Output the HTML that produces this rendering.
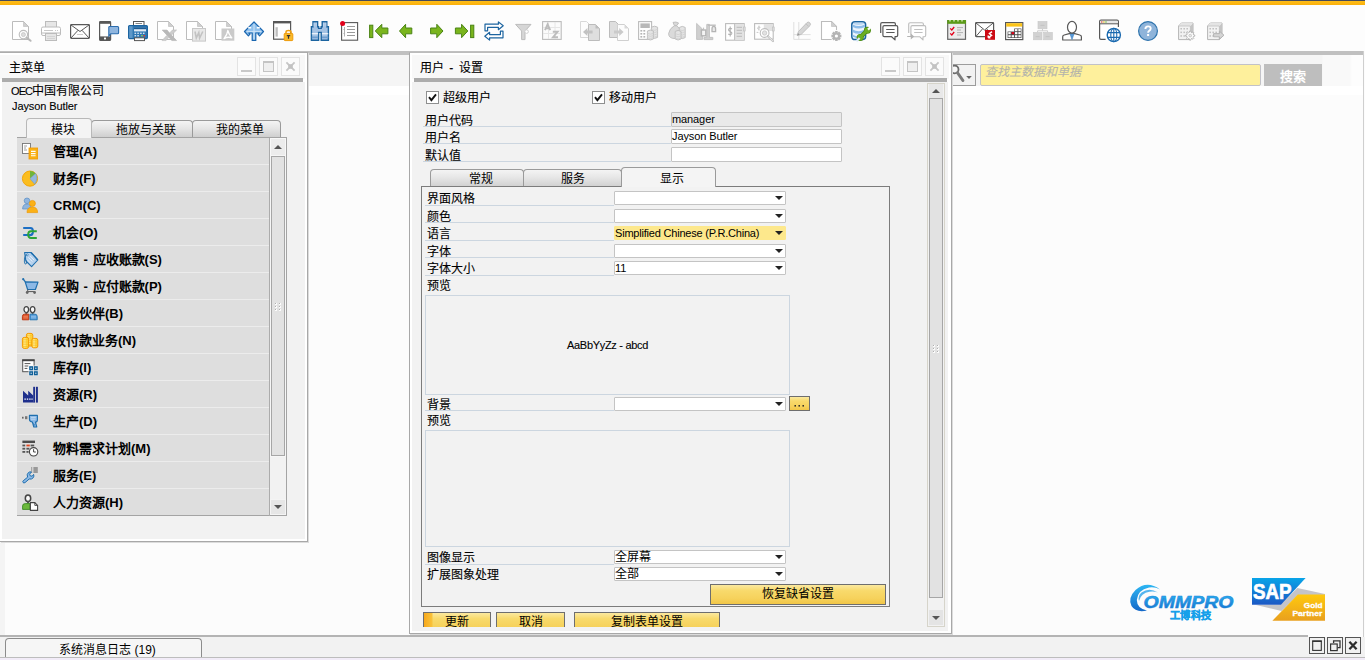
<!DOCTYPE html>
<html lang="zh-CN"><head><meta charset="utf-8"><title>SAP Business One</title>
<style>
*{box-sizing:border-box;margin:0;padding:0}
html,body{width:1365px;height:660px;overflow:hidden}
body{background:#fcfcfc;font-family:"Liberation Sans",sans-serif;font-size:12px;color:#000;position:relative}
.a{position:absolute}
.t{position:absolute;white-space:nowrap;line-height:16px;height:16px;margin-top:1px;-webkit-text-stroke-width:.1px}
.s11{font-size:11px;letter-spacing:-0.1px;margin-top:0}
.win{position:absolute;background:#fff}
.wtitle{position:absolute;background:#f8f8f8}
.wbody{position:absolute;background:#f2f2f2}
.tbar{position:absolute;height:4px;background:#acacac}
.wb{position:absolute;width:19px;height:19px;top:57px;border:1px solid #e3e3e3;background:#fbfbfb}
.row{position:absolute;left:17px;width:252px;height:26px;background:#dedede}
.row b{position:absolute;left:36px;top:6px;font-size:13px;line-height:16px;white-space:nowrap;word-spacing:1px}
.row svg{position:absolute;left:5px;top:5px}
.sep{position:absolute;left:17px;width:252px;height:1px;background:#ececec}
.ul{position:absolute;height:1px;background:#ccd6e0}
.inp{position:absolute;height:15px;border:1px solid #c4c4c4;background:#fff;border-radius:1px;font-size:11px;line-height:13px;padding-left:0;letter-spacing:-0.1px;white-space:nowrap}
.dd{position:absolute;left:614px;width:172px;height:14px;border:1px solid #c4c4c4;background:#fff;border-radius:1px;font-size:11px;line-height:12px;padding-left:0;white-space:nowrap}
.dd i{position:absolute;right:2px;top:4px;width:0;height:0;border-left:4px solid transparent;border-right:4px solid transparent;border-top:4px solid #222}
.tab{position:absolute;padding-left:7px;padding-top:1px;border:1px solid #9a9a9a;border-bottom:none;border-radius:4px 4px 0 0;background:linear-gradient(#f4f4f4,#e6e6e6 45%,#cfcfcf);text-align:center;line-height:17px}
.tab.on{background:#f4f4f4;border-color:#b8b8b8}
.btn{position:absolute;border:1px solid #6e6e6e;background:linear-gradient(#fbe9a0,#f8da6c 30%,#f6d25c 70%,#f1c648);text-align:center;white-space:nowrap}
.pv{position:absolute;border:1px solid #ccd6e0;background:#f2f2f2}
.ic{position:absolute;top:21px}
.sb{position:absolute;width:16px;height:17px;top:637px;border:1px solid #555;background:#f0f0f0}
</style></head>
<body>
<div class="a" style="left:0;top:0;width:1365px;height:1px;background:#454b5c"></div><div class="a" style="left:0;top:1px;width:1365px;height:4px;background:linear-gradient(#fdbd1a,#fbb00a)"></div><div class="a" style="left:0;top:5px;width:1365px;height:46px;background:#fdfdfd"></div><div class="a" style="left:0;top:51px;width:1363px;height:4px;background:#c0c0c0"></div><div class="a" style="left:0;top:55px;width:1363px;height:31px;background:linear-gradient(90deg,#f5f5f5 0,#f5f5f5 1322px,#f9f9f9 1323px,#f9f9f9 1350px,#fdfdfd 1352px)"></div><div class="a" style="left:0;top:86px;width:1363px;height:9px;background:#ffffff"></div><div class="a" style="left:1363px;top:51px;width:1px;height:586px;background:#cfcfcf"></div><div class="a" style="left:0;top:542px;width:5px;height:94px;background:#f4f4f4"></div><div class="ic" style="left:12px"><svg width="24" height="22" viewBox="0 0 24 22" style="overflow:visible;display:block"><path d="M.5 .5H11.5L16.5 5.5V18.5H.5Z" fill="#fff" stroke="#bcbcbc"/><path d="M11.5 .5V5.5H16.5Z" fill="#cfcfcf" stroke="#bcbcbc" stroke-width=".6"/><circle cx="11.4" cy="13.6" r="4.2" fill="#fff" stroke="#bdbdbd" stroke-width="1.1"/><circle cx="11.4" cy="13.6" r="2" fill="#ddd" stroke="#c4c4c4" stroke-width=".8"/><path d="M14.6 16.6L18.6 19.8" stroke="#b8b8b8" stroke-width="2" stroke-linecap="round"/></svg></div><div class="ic" style="left:41px"><svg width="24" height="22" viewBox="0 0 24 22" style="overflow:visible;display:block"><rect x="4.5" y=".5" width="11" height="6" fill="#e6e6e6" stroke="#bcbcbc"/><rect x=".5" y="6" width="19" height="8.5" rx="1.5" fill="#fff" stroke="#bcbcbc"/><path d="M3 9.5H12M14 9.5H15M16 9.5H17" stroke="#c8c8c8"/><path d="M.5 12H19.5" stroke="#bcbcbc"/><rect x="4.5" y="12.5" width="11" height="7" fill="#e6e6e6" stroke="#bcbcbc"/><path d="M6 15.5H14M6 17.5H14" stroke="#d4d4d4"/></svg></div><div class="ic" style="left:70px"><svg width="24" height="22" viewBox="0 0 24 22" style="overflow:visible;display:block"><rect x=".6" y="3.6" width="18.8" height="13.8" rx=".8" fill="#fff" stroke="#585858" stroke-width="1.2"/><path d="M1 4L10 10.5L19 4M1 17L8 9.3M19 17L12 9.3" fill="none" stroke="#585858" stroke-width="1"/><path d="M7 13.5H13" stroke="#ccc"/></svg></div><div class="ic" style="left:99px"><svg width="24" height="22" viewBox="0 0 24 22" style="overflow:visible;display:block"><rect x=".6" y=".6" width="11" height="18.8" rx=".8" fill="#fff" stroke="#585858" stroke-width="1.2"/><rect x=".6" y=".6" width="11" height="2.2" fill="#585858"/><rect x=".6" y="15.4" width="11" height="4" fill="#585858"/><rect x="5" y="16.6" width="2" height="1.8" fill="#fff"/><path d="M10.2 5.5H18.6Q19.6 5.5 19.6 6.5V11.8Q19.6 12.8 18.6 12.8H11.8L9.8 15V6.2Q9.8 5.5 10.6 5.5Z" fill="#8fb5de" stroke="#2a6cae" stroke-width="1.1"/></svg></div><div class="ic" style="left:128px"><svg width="24" height="22" viewBox="0 0 24 22" style="overflow:visible;display:block"><rect x="5.5" y=".5" width="10.5" height="5" fill="#fff" stroke="#555"/><path d="M7.5 2.5H14" stroke="#888"/><rect x=".6" y="4.6" width="18.8" height="13" rx="1" fill="#2f77b3" stroke="#1c64a0" stroke-width="1.2"/><rect x="1.2" y="5.2" width="3.4" height="11.8" fill="#5e98c9"/><rect x="6" y="6.2" width="12" height="4.2" fill="#dfeaf5"/><rect x="6" y="6.2" width="12" height="2" fill="#1c5c94"/><g fill="#cfe0f0"><rect x="6.5" y="11.6" width="1.6" height="1.4"/><rect x="9.3" y="11.6" width="1.6" height="1.4"/><rect x="12.1" y="11.6" width="1.6" height="1.4"/><rect x="14.9" y="11.6" width="1.6" height="1.4"/><rect x="6.5" y="14" width="1.6" height="1.4"/><rect x="9.3" y="14" width="1.6" height="1.4"/></g><rect x="13.2" y="14" width="1.5" height="1.4" fill="#8fd14f"/><rect x="15.6" y="14" width="1.5" height="1.4" fill="#e8372c"/><rect x="6.5" y="16.8" width="10" height="2.8" fill="#fff" stroke="#555"/></svg></div><div class="ic" style="left:157px"><svg width="24" height="22" viewBox="0 0 24 22" style="overflow:visible;display:block"><path d="M.5 .5H11.5L16.5 5.5V18.5H.5Z" fill="#fff" stroke="#bcbcbc"/><path d="M11.5 .5V5.5H16.5Z" fill="#cfcfcf" stroke="#bcbcbc" stroke-width=".6"/><path d="M5.2 9H10L12.4 12.2L15.4 9H19.6L14.4 14.2L19.6 19.6H14.8L12 16.2L9 19.6H5L10 14.2Z" fill="#cdcdcd" stroke="#bdbdbd" stroke-width=".6"/><path d="M5.2 9H10L19.6 19.6H14.8Z" fill="#b9b9b9"/></svg></div><div class="ic" style="left:186px"><svg width="24" height="22" viewBox="0 0 24 22" style="overflow:visible;display:block"><path d="M.5 .5H11.5L16.5 5.5V18.5H.5Z" fill="#fff" stroke="#bcbcbc"/><path d="M11.5 .5V5.5H16.5Z" fill="#cfcfcf" stroke="#bcbcbc" stroke-width=".6"/><rect x="6.5" y="7.5" width="13" height="12.6" fill="#e8e8e8" stroke="#c8c8c8"/><path d="M9 10.5L10.3 17L12.8 11.5L13.6 17L16.8 10.5" fill="none" stroke="#c2c2c2" stroke-width="1.6"/></svg></div><div class="ic" style="left:215px"><svg width="24" height="22" viewBox="0 0 24 22" style="overflow:visible;display:block"><path d="M.5 .5H11.5L16.5 5.5V18.5H.5Z" fill="#fff" stroke="#bcbcbc"/><path d="M11.5 .5V5.5H16.5Z" fill="#cfcfcf" stroke="#bcbcbc" stroke-width=".6"/><rect x="6.5" y="7.5" width="12.8" height="12.2" fill="#cacaca"/><path d="M12.8 9.5Q13.6 13 16.8 16.8Q12.8 15.4 9 17.6Q12.4 13.5 12.8 9.5Z" fill="none" stroke="#fff" stroke-width="1.3" stroke-linejoin="round"/></svg></div><div class="ic" style="left:244px"><svg width="24" height="22" viewBox="0 0 24 22" style="overflow:visible;display:block"><path d="M10 .8L19.5 10.5L15.6 14.8L14 13.2L15.2 12H11.8V19.4H8.2V12H4.8L6 13.2L4.4 14.8L.5 10.5Z" fill="#8fc0ec" stroke="#1a66b0" stroke-width="1.2" stroke-linejoin="round"/><path d="M10 3V18.6M2.6 10.4H17.4" stroke="#cfe4f7" stroke-width="1"/><rect x="4.2" y="5.9" width="3" height="1.6" fill="#fff"/><rect x="12.8" y="5.9" width="3" height="1.6" fill="#fff"/></svg></div><div class="ic" style="left:273px"><svg width="24" height="22" viewBox="0 0 24 22" style="overflow:visible;display:block"><rect x=".6" y=".6" width="17" height="17.6" fill="#fff" stroke="#585858" stroke-width="1.2"/><rect x=".6" y=".6" width="17" height="1.8" fill="#585858"/><rect x="2.5" y="6.2" width="2.3" height="9.4" fill="#bdbdbd"/><path d="M13 12.4V11Q13 9.4 15.5 9.4Q18 9.4 18 11V12.4" fill="none" stroke="#f0a010" stroke-width="1.5"/><rect x="11.2" y="12.4" width="8.6" height="7.2" rx=".8" fill="#f9b92a" stroke="#ee9a08" stroke-width="1"/><path d="M13.8 14H17.2V15.2H16.1V17.8H14.9V15.2H13.8Z" fill="#333"/></svg></div><div class="ic" style="left:310px"><svg width="24" height="22" viewBox="0 0 24 22" style="overflow:visible;display:block"><path d="M3 .7H7.6V5.8H8.6V7.4H11.2V5.8H12.2V.7H16.8V5.8H18.4V19.3H11.2V11.4H8.6V19.3H1.4V5.8H3Z" fill="#a4c2e4" stroke="#1c64a0" stroke-width="1.4" stroke-linejoin="miter"/><path d="M1.8 12.8H8.1M12 12.8H18.3" stroke="#fff" stroke-width="1.1"/><path d="M1.8 16.4H8.1M12 16.4H18.3" stroke="#6f9dce" stroke-width="1.6"/><path d="M4 1.6V5.6M6.2 1.6V5.6M13.8 1.6V5.6M16 1.6V5.6" stroke="#cadcf0" stroke-width=".8"/></svg></div><div class="ic" style="left:340px"><svg width="24" height="22" viewBox="0 0 24 22" style="overflow:visible;display:block"><rect x="1.6" y="1.6" width="16" height="17.6" fill="#fff" stroke="#585858" stroke-width="1.1"/><path d="M7 5.5H15M7 8.5H15M7 11.5H15M7 14.5H15" stroke="#9a9a9a" stroke-width="1"/><path d="M4.5 6V15.5M3.5 8.5H4.5M3.5 12.5H4.5" stroke="#a8a8a8" stroke-width=".9" fill="none"/><circle cx="2.6" cy="2.6" r="2.5" fill="#e2001a"/></svg></div><div class="ic" style="left:369px"><svg width="24" height="22" viewBox="0 0 24 22" style="overflow:visible;display:block"><rect x=".6" y="4.2" width="3.2" height="12.4" fill="#7ab51d" stroke="#4a8414"/><path d="M6.3 10L12.8 3.3V7H18.9V12.8H12.8V16.7Z" fill="#7ab51d" stroke="#4a8414" stroke-width="1" stroke-linejoin="round"/></svg></div><div class="ic" style="left:399px"><svg width="24" height="22" viewBox="0 0 24 22" style="overflow:visible;display:block"><path d="M.5 10L6.6 3.3V7H12.8V12.8H6.6V16.7Z" fill="#7ab51d" stroke="#4a8414" stroke-width="1" stroke-linejoin="round"/></svg></div><div class="ic" style="left:430px"><svg width="24" height="22" viewBox="0 0 24 22" style="overflow:visible;display:block"><path d="M13 10L6.8 3.3V7H.6V12.8H6.8V16.7Z" fill="#7ab51d" stroke="#4a8414" stroke-width="1" stroke-linejoin="round"/></svg></div><div class="ic" style="left:455px"><svg width="24" height="22" viewBox="0 0 24 22" style="overflow:visible;display:block"><rect x="15.6" y="4.2" width="3.2" height="12.4" fill="#7ab51d" stroke="#4a8414"/><path d="M12.8 10L6.6 3.3V7H.4V12.8H6.6V16.7Z" fill="#7ab51d" stroke="#4a8414" stroke-width="1" stroke-linejoin="round"/></svg></div><div class="ic" style="left:484px"><svg width="24" height="22" viewBox="0 0 24 22" style="overflow:visible;display:block"><path d="M1 9.8V3.2H14.4V.9L19.2 4.8L14.4 8.7V6.4H3.6V9.8Z" fill="#fff" stroke="#1c64a0" stroke-width="1.2" stroke-linejoin="round"/><path d="M19 10.2V16.8H5.6V19.1L.8 15.2L5.6 11.3V13.6H16.4V10.2Z" fill="#fff" stroke="#1c64a0" stroke-width="1.2" stroke-linejoin="round"/></svg></div><div class="ic" style="left:515px"><svg width="24" height="22" viewBox="0 0 24 22" style="overflow:visible;display:block"><path d="M.6 3.4H16L10 10V18.6H6.6V10Z" fill="#d6d6d6" stroke="#bcbcbc" stroke-width="1" stroke-linejoin="round"/><circle cx="11.6" cy="10.6" r="1.8" fill="#fff" stroke="#d0d0d0"/></svg></div><div class="ic" style="left:542px"><svg width="24" height="22" viewBox="0 0 24 22" style="overflow:visible;display:block"><rect x=".6" y=".6" width="18.6" height="17.8" fill="#fbfbfb" stroke="#bcbcbc" stroke-width="1.1"/><path d="M6.5 1V18M13 1V18M1 6.5H19M1 12.5H19" stroke="#e6e6e6"/><path d="M3 9.2L5.6 3.4L8.2 9.2M4 7.4H7.2" fill="none" stroke="#bdbdbd" stroke-width="1.9"/><path d="M10.8 10.8H15.6L11 16.2H16" fill="none" stroke="#bdbdbd" stroke-width="1.9"/></svg></div><div class="ic" style="left:580px"><svg width="24" height="22" viewBox="0 0 24 22" style="overflow:visible;display:block"><path d="M.5 .5H6.5L9.5 3.5V16.5H.5Z" fill="#fcfcfc" stroke="#d8d8d8"/><path d="M8.5 3.5H15.5L19.5 7.5V19.5H8.5Z" fill="#dedede" stroke="#bcbcbc"/><path d="M15.5 3.5V7.5H19.5Z" fill="#bdbdbd"/><path d="M3 11L7.4 7V9.6H12.6V12.4H7.4V15Z" fill="#c2c2c2"/></svg></div><div class="ic" style="left:609px"><svg width="24" height="22" viewBox="0 0 24 22" style="overflow:visible;display:block"><path d="M.5 .5H6.5L9.5 3.5V16.5H.5Z" fill="#dedede" stroke="#bcbcbc"/><path d="M8.5 3.5H15.5L19.5 7.5V19.5H8.5Z" fill="#fcfcfc" stroke="#d0d0d0"/><path d="M15.5 3.5V7.5H19.5Z" fill="#d8d8d8"/><path d="M14.6 11L10.2 7V9.6H5V12.4H10.2V15Z" fill="#cacaca"/></svg></div><div class="ic" style="left:638px"><svg width="24" height="22" viewBox="0 0 24 22" style="overflow:visible;display:block"><rect x=".6" y=".6" width="13" height="17.8" fill="#fff" stroke="#bcbcbc" stroke-width="1.1"/><rect x="2.4" y="2.4" width="9.4" height="4.6" fill="#b8b8b8"/><g fill="#b4b4b4"><rect x="2.4" y="9" width="1.8" height="1.6"/><rect x="5.4" y="9" width="1.8" height="1.6"/><rect x="2.4" y="12" width="1.8" height="1.6"/><rect x="5.4" y="12" width="1.8" height="1.6"/><rect x="2.4" y="15" width="1.8" height="1.6"/><rect x="5.4" y="15" width="1.8" height="1.6"/></g><path d="M13.4 6.2V16.4Q16.5 18.4 19.6 16.4V6.2Q16.5 4.2 13.4 6.2Z" fill="#e4e4e4" stroke="#bcbcbc" stroke-width=".9"/><path d="M13.4 8.4Q16.5 10.4 19.6 8.4" fill="none" stroke="#cfcfcf" stroke-width=".8"/><path d="M13.4 10.600000000000001Q16.5 12.600000000000001 19.6 10.600000000000001" fill="none" stroke="#cfcfcf" stroke-width=".8"/><path d="M13.4 12.8Q16.5 14.8 19.6 12.8" fill="none" stroke="#cfcfcf" stroke-width=".8"/><path d="M13.4 15.0Q16.5 17.0 19.6 15.0" fill="none" stroke="#cfcfcf" stroke-width=".8"/><path d="M9.4 10V18Q12.4 20 15.4 18V10Q12.4 8 9.4 10Z" fill="#e4e4e4" stroke="#bcbcbc" stroke-width=".9"/><path d="M9.4 12.2Q12.4 14.2 15.4 12.2" fill="none" stroke="#cfcfcf" stroke-width=".8"/><path d="M9.4 14.399999999999999Q12.4 16.4 15.4 14.399999999999999" fill="none" stroke="#cfcfcf" stroke-width=".8"/><path d="M9.4 16.599999999999998Q12.4 18.599999999999998 15.4 16.599999999999998" fill="none" stroke="#cfcfcf" stroke-width=".8"/></svg></div><div class="ic" style="left:668px"><svg width="24" height="22" viewBox="0 0 24 22" style="overflow:visible;display:block"><path d="M5 1.4Q8 .4 10.6 2L8.8 4.6H6.4Z" fill="#d8d8d8" stroke="#bcbcbc" stroke-width=".9"/><path d="M6.2 4.8H9Q13 8 13 13Q13 17.6 7.4 17.6Q.6 17.6 .6 12.6Q1.4 7.6 6.2 4.8Z" fill="#dadada" stroke="#bcbcbc" stroke-width=".9"/><path d="M11.4 6.4V16.6Q14.3 18.6 17.2 16.6V6.4Q14.3 4.4 11.4 6.4Z" fill="#e4e4e4" stroke="#bcbcbc" stroke-width=".9"/><path d="M11.4 8.600000000000001Q14.3 10.600000000000001 17.2 8.600000000000001" fill="none" stroke="#cfcfcf" stroke-width=".8"/><path d="M11.4 10.8Q14.3 12.8 17.2 10.8" fill="none" stroke="#cfcfcf" stroke-width=".8"/><path d="M11.4 13.0Q14.3 15.0 17.2 13.0" fill="none" stroke="#cfcfcf" stroke-width=".8"/><path d="M11.4 15.2Q14.3 17.2 17.2 15.2" fill="none" stroke="#cfcfcf" stroke-width=".8"/><path d="M7.2 10.4V18Q10.1 20 13 18V10.4Q10.1 8.4 7.2 10.4Z" fill="#e4e4e4" stroke="#bcbcbc" stroke-width=".9"/><path d="M7.2 12.600000000000001Q10.1 14.600000000000001 13 12.600000000000001" fill="none" stroke="#cfcfcf" stroke-width=".8"/><path d="M7.2 14.8Q10.1 16.8 13 14.8" fill="none" stroke="#cfcfcf" stroke-width=".8"/><path d="M7.2 17.0Q10.1 19.0 13 17.0" fill="none" stroke="#cfcfcf" stroke-width=".8"/></svg></div><div class="ic" style="left:696px"><svg width="24" height="22" viewBox="0 0 24 22" style="overflow:visible;display:block"><path d="M.6 2.4L6.6 8.2V18.4H.6Z" fill="#cfcfcf" stroke="#bcbcbc" stroke-width=".8"/><path d="M10.8 3.4H13.4V16.4H16.8V18.6H8V16.4H10.8Z" fill="#d0d0d0" stroke="#bcbcbc" stroke-width=".9"/><path d="M12 4.2H19.8" stroke="#bdbdbd" stroke-width="1.4"/><rect x="5.4" y="9" width="4.4" height="5.8" fill="#f4f4f4" stroke="#b4b4b4" stroke-width="1.4"/><path d="M7.6 6.6V9" stroke="#bdbdbd" stroke-width="1"/><path d="M16 10.6V8Q16 5.4 17.8 5.4Q19.6 5.4 19.6 8V10.6Z" fill="#e9e9e9" stroke="#b4b4b4" stroke-width="1.3"/></svg></div><div class="ic" style="left:725px"><svg width="24" height="22" viewBox="0 0 24 22" style="overflow:visible;display:block"><rect x=".6" y="2.6" width="18.6" height="16.6" fill="#fff" stroke="#bcbcbc" stroke-width="1.1"/><rect x="9.8" y="3" width="9" height="15.8" fill="#e2e2e2"/><path d="M9.6 2.6V19" stroke="#bcbcbc"/><rect x="18.6" y="6" width="1.6" height="4" fill="#ddd" stroke="#bcbcbc" stroke-width=".6"/><path d="M11.6 6.4H17M11.6 9.4H17M11.6 12.4H17M11.6 15.4H17" stroke="#c2c2c2" stroke-width="1.1"/><path d="M7 8Q5 6.6 3.8 8Q3 9.6 5.2 10.4Q7.4 11.4 6.6 13Q5.4 14.4 3.2 13M5.2 5.4V15.6" fill="none" stroke="#b0b0b0" stroke-width="1.1"/></svg></div><div class="ic" style="left:754px"><svg width="24" height="22" viewBox="0 0 24 22" style="overflow:visible;display:block"><rect x=".6" y="2.6" width="18.6" height="15.6" fill="#fff" stroke="#bcbcbc" stroke-width="1.1"/><rect x="9.8" y="3" width="9" height="7" fill="#e2e2e2"/><rect x="18.6" y="6" width="1.6" height="4" fill="#ddd" stroke="#bcbcbc" stroke-width=".6"/><path d="M6.4 6.4Q4.4 5.4 3.6 6.8Q3.4 8 5 8.4M2.6 11.4H4.4M5 4.6V9.6" fill="none" stroke="#c2c2c2" stroke-width=".9"/><circle cx="10.6" cy="12" r="4.4" fill="#fff" stroke="#bdbdbd" stroke-width="1.1"/><circle cx="10.6" cy="12" r="2.2" fill="#e2e2e2" stroke="#c6c6c6" stroke-width=".8"/><path d="M13.8 15.2L19 20" stroke="#c0c0c0" stroke-width="2.2" stroke-linecap="round"/><path d="M14.2 15.6L18.8 19.8" stroke="#f4f4f4" stroke-width=".8"/></svg></div><div class="ic" style="left:793px"><svg width="24" height="22" viewBox="0 0 24 22" style="overflow:visible;display:block"><path d="M.8 1V18.4M5.8 1V18.4M.8 13.6H17.6M.8 18.4H17.6" stroke="#dcdcdc" stroke-width=".9" fill="none"/><path d="M4.2 14.6L5.4 10.6L14 1.6Q15.4 .4 16.8 1.8Q18.2 3.4 17 4.6L8.2 13.4Z" fill="#d6d6d6" stroke="#bdbdbd" stroke-width=".9" stroke-linejoin="round"/><path d="M4.2 14.6L5 12L6.8 13.8Z" fill="#9a9a9a"/><path d="M13 2.8L15.8 5.6" stroke="#bdbdbd" stroke-width=".9"/></svg></div><div class="ic" style="left:821px"><svg width="24" height="22" viewBox="0 0 24 22" style="overflow:visible;display:block"><path d="M.5 .5H10.5L15.5 5.5V18.5H.5Z" fill="#fff" stroke="#bcbcbc" stroke-width="1.1"/><path d="M10.5 .5V5.5H15.5Z" fill="#cfcfcf" stroke="#bcbcbc" stroke-width=".6"/><circle cx="15.4" cy="15" r="6" fill="#fdfdfd"/><g transform="translate(15.4 15)"><g fill="#b4b4b4"><rect x="-1.3" y="-5" width="2.6" height="10" transform="rotate(0)"/><rect x="-1.3" y="-5" width="2.6" height="10" transform="rotate(45)"/><rect x="-1.3" y="-5" width="2.6" height="10" transform="rotate(90)"/><rect x="-1.3" y="-5" width="2.6" height="10" transform="rotate(135)"/><circle r="3.5999999999999996"/></g><circle r="1.6" fill="#fff"/></g></svg></div><div class="ic" style="left:851px"><svg width="24" height="22" viewBox="0 0 24 22" style="overflow:visible;display:block"><path d="M.8 3.6Q.8 .8 4 .8H11.4Q14.6 .8 14.6 3.6V15.6Q14.6 18.6 11.4 18.6H4Q.8 18.6 .8 15.6Z" fill="#eef5fc" stroke="#1c64a0" stroke-width="1.5"/><path d="M1.8 3.4Q7.6 6.6 13.8 3.4V6Q7.6 9.2 1.8 6ZM1.8 8.6Q7.6 11.8 13.8 8.6V11.2Q7.6 14.4 1.8 11.2ZM1.8 13.8Q7.6 17 13.8 13.8V15.8Q7.6 18.4 1.8 15.8Z" fill="#8dbdea"/><path d="M2.2 1.8H13V3Q7.6 5 2.2 3Z" fill="#b9d6f2"/><g><path d="M9.6 16L16 9.6" stroke="#4a8a12" stroke-width="4.2" stroke-linecap="round"/><circle cx="16.4" cy="9.2" r="3.5" fill="#4a8a12"/><circle cx="9.2" cy="16.4" r="3.5" fill="#4a8a12"/><path d="M9.6 16L16 9.6" stroke="#6aae22" stroke-width="2.8" stroke-linecap="round"/><circle cx="16.4" cy="9.2" r="2.8" fill="#6aae22"/><circle cx="9.2" cy="16.4" r="2.8" fill="#6aae22"/><path d="M17 8.6L20.4 5.2" stroke="#fdfdfd" stroke-width="2.2"/><path d="M8.6 17L5.4 20.2" stroke="#d9e9f8" stroke-width="2.2"/></g></svg></div><div class="ic" style="left:880px"><svg width="24" height="22" viewBox="0 0 24 22" style="overflow:visible;display:block"><path d="M.7 12V3.1Q.7 1.7 2.1 1.7H14Q15.4 1.7 15.4 3.1V4" fill="none" stroke="#585858" stroke-width="1.2"/><path d="M4.3 4.6H16.3Q17.7 4.6 17.7 6V14.3Q17.7 15.7 16.3 15.7H15V18.9L11.6 15.7H4.3Q2.9 15.7 2.9 14.3V6Q2.9 4.6 4.3 4.6Z" fill="#fff" stroke="#585858" stroke-width="1.2" stroke-linejoin="round"/><path d="M6.2 8.5H14.6M6.2 11.5H14.6" stroke="#585858" stroke-width="1.2"/></svg></div><div class="ic" style="left:907px"><svg width="24" height="22" viewBox="0 0 24 22" style="overflow:visible;display:block"><path d="M1.7 12V3.1Q1.7 1.7 3.1 1.7H15Q16.4 1.7 16.4 3.1V4" fill="none" stroke="#bdbdbd" stroke-width="1.1"/><path d="M5.3 4.6H17.3Q18.7 4.6 18.7 6V14.3Q18.7 15.7 17.3 15.7H16V18.9L12.6 15.7H5.3Q3.9 15.7 3.9 14.3V6Q3.9 4.6 5.3 4.6Z" fill="#fff" stroke="#bdbdbd" stroke-width="1.1" stroke-linejoin="round"/><path d="M7.2 8.5H15.6M7.2 11.5H15.6" stroke="#c0c0c0" stroke-width="1.2"/><path d="M.2 14.9H3.8V12.6L7.2 15.5L3.8 18.4V16.1H.2Z" fill="#b2b2b2"/></svg></div><div class="ic" style="left:947px"><svg width="24" height="22" viewBox="0 0 24 22" style="overflow:visible;display:block"><rect x=".7" y="-.3" width="17.8" height="18.6" fill="#ebebeb" stroke="#666" stroke-width="1.2"/><rect x=".2" y="-1" width="18.8" height="3.8" fill="#5b9a18"/><path d="M3 -1V.4M7 -1V.4M11 -1V.4M15 -1V.4" stroke="#d8ecb8" stroke-width="1.4"/><path d="M3.2 7.4L4.8 9L7.2 6M3.2 12.4L4.8 14L7.2 11" fill="none" stroke="#e2001a" stroke-width="1.3"/><path d="M10 6.6H16M10 9H14M10 11.6H16M10 14H14" stroke="#b2b2b2" stroke-width="1"/></svg></div><div class="ic" style="left:975px"><svg width="24" height="22" viewBox="0 0 24 22" style="overflow:visible;display:block"><rect x=".6" y="1.6" width="18" height="14" rx=".8" fill="#fff" stroke="#585858" stroke-width="1.2"/><path d="M1 2L9.6 9L18.2 2M1 15.4L7.4 8M18.2 15.4L11.8 8" fill="none" stroke="#585858" stroke-width="1"/><rect x="10" y="9" width="10" height="9.8" fill="#cc0a14"/><path d="M17 10.6L14.4 12.6L16.6 14.4L13.2 16.8M13.2 16.8V14.6M13.2 16.8H15.4" fill="none" stroke="#fff" stroke-width="1.4"/></svg></div><div class="ic" style="left:1005px"><svg width="24" height="22" viewBox="0 0 24 22" style="overflow:visible;display:block"><rect x=".6" y="1.6" width="17.2" height="17" fill="#fff" stroke="#585858" stroke-width="1.2"/><rect x="1.2" y="2.2" width="16" height="3.4" fill="#fcc419"/><path d="M9.2 7.4H16.4V17H2.6V10.4H9.2Z" fill="#505050"/><rect x="10.00" y="8.1" width="2.4" height="2.1" fill="#fff"/><rect x="13.35" y="8.1" width="2.4" height="2.1" fill="#fff"/><rect x="3.30" y="11.1" width="2.4" height="2.1" fill="#fff"/><rect x="6.65" y="11.1" width="2.4" height="2.1" fill="#e2001a"/><rect x="10.00" y="11.1" width="2.4" height="2.1" fill="#fff"/><rect x="13.35" y="11.1" width="2.4" height="2.1" fill="#fff"/><rect x="3.30" y="14.2" width="2.4" height="2.1" fill="#fff"/><rect x="6.65" y="14.2" width="2.4" height="2.1" fill="#fff"/><rect x="10.00" y="14.2" width="2.4" height="2.1" fill="#fff"/><rect x="13.35" y="14.2" width="2.4" height="2.1" fill="#fff"/></svg></div><div class="ic" style="left:1033px"><svg width="24" height="22" viewBox="0 0 24 22" style="overflow:visible;display:block"><rect x="5" y=".4" width="9" height="7.4" fill="#d2d2d2" stroke="#c8c8c8" stroke-width=".6"/><path d="M9.5 7.8V9.8M4.6 11.4V9.8H14.6V11.4" fill="none" stroke="#cdcdcd" stroke-width="1"/><rect x=".4" y="11.4" width="8.6" height="7.4" fill="#d2d2d2" stroke="#c8c8c8" stroke-width=".6"/><rect x="10.6" y="11.4" width="8.8" height="7.4" fill="#d2d2d2" stroke="#c8c8c8" stroke-width=".6"/><path d="M7.4 4.4H11.6M2.6 15.6H6.6M12.6 15.6H16.6" stroke="#c0c0c0" stroke-width=".8"/></svg></div><div class="ic" style="left:1062px"><svg width="24" height="22" viewBox="0 0 24 22" style="overflow:visible;display:block"><path d="M.7 19V15.8Q.7 14.4 2.2 14L7.2 12.6H12.8L17.8 14Q19.4 14.4 19.4 15.8V19Z" fill="#fff" stroke="#585858" stroke-width="1.2" stroke-linejoin="round"/><path d="M8 13L10 18.6L12 13Z" fill="#5b9bd8" stroke="#3f83c4" stroke-width=".6"/><ellipse cx="10" cy="6.2" rx="4.5" ry="5.8" fill="#fff" stroke="#585858" stroke-width="1.2"/></svg></div><div class="ic" style="left:1099px"><svg width="24" height="22" viewBox="0 0 24 22" style="overflow:visible;display:block"><path d="M6.6 18.4H2Q.6 18.4 .6 17V.6Q.6 -.8 2 -.8H18Q19.4 -.8 19.4 .6V6" fill="#fff" stroke="#585858" stroke-width="1.2"/><rect x="1.2" y="-.2" width="17.6" height="2.6" fill="#e8e8e8"/><path d="M.6 2.8H19.4" stroke="#585858" stroke-width="1"/><circle cx="2.8" cy="1" r=".7" fill="#e8372c"/><circle cx="4.9" cy="1" r=".7" fill="#f5c400"/><circle cx="7" cy="1" r=".7" fill="#5cb82c"/><circle cx="14.8" cy="14" r="6.6" fill="#fff" stroke="#1b6ab0" stroke-width="1.4"/><ellipse cx="14.8" cy="14" rx="3" ry="6.6" fill="none" stroke="#1b6ab0" stroke-width="1.1"/><path d="M8.6 11.6H21M8.6 16.4H21M14.8 7.4V20.6" stroke="#1b6ab0" stroke-width="1.1"/></svg></div><div class="ic" style="left:1138px"><svg width="24" height="22" viewBox="0 0 24 22" style="overflow:visible;display:block"><circle cx="10" cy="10" r="9.4" fill="#8fb4da" stroke="#2f74ad" stroke-width="1.2"/><path d="M7.4 8Q7.4 5.4 10.1 5.4Q12.7 5.4 12.7 7.6Q12.7 9 11.2 9.8Q10.1 10.5 10.1 11.8" fill="none" stroke="#fff" stroke-width="1.9"/><rect x="9.1" y="13" width="2" height="2" fill="#fff"/></svg></div><div class="ic" style="left:1178px"><svg width="24" height="22" viewBox="0 0 24 22" style="overflow:visible;display:block"><g transform="translate(0 1)"><path d="M.6 4L3.4 1H15V14.6L12.4 17.6H.6Z" fill="#f2f2f2" stroke="#b4b4b4" stroke-width="1" stroke-linejoin="round"/><path d="M12.4 4L15 1V14.6L12.4 17.6Z" fill="#c4c4c4"/><path d="M.6 4L3.4 1H15L12.4 4Z" fill="#e4e4e4"/><path d="M.6 4H12.4V17.6" fill="none" stroke="#c0c0c0" stroke-width=".8"/><g fill="#c2c2c2"><rect x="2.4" y="6" width="1.6" height="1.5"/><rect x="5.4" y="6" width="1.6" height="1.5"/><rect x="8.4" y="6" width="1.6" height="1.5"/><rect x="2.4" y="9.6" width="1.6" height="1.5"/><rect x="5.4" y="9.6" width="1.6" height="1.5"/><rect x="8.4" y="9.6" width="1.6" height="1.5"/><rect x="2.4" y="13.2" width="1.6" height="1.5"/><rect x="5.4" y="13.2" width="1.6" height="1.5"/></g><path d="M16.76 13.00L16.76 14.20L15.40 14.46L15.07 15.25L15.85 16.40L15.00 17.25L13.85 16.47L13.06 16.80L12.80 18.16L11.60 18.16L11.34 16.80L10.55 16.47L9.40 17.25L8.55 16.40L9.33 15.25L9.00 14.46L7.64 14.20L7.64 13.00L9.00 12.74L9.33 11.95L8.55 10.80L9.40 9.95L10.55 10.73L11.34 10.40L11.60 9.04L12.80 9.04L13.06 10.40L13.85 10.73L15.00 9.95L15.85 10.80L15.07 11.95L15.40 12.74Z" fill="#fff" stroke="#b0b0b0" stroke-width=".9" stroke-linejoin="round"/><circle cx="12.2" cy="13.6" r="1.38" fill="#e8e8e8" stroke="#b8b8b8" stroke-width=".7"/></g></svg></div><div class="ic" style="left:1207px"><svg width="24" height="22" viewBox="0 0 24 22" style="overflow:visible;display:block"><g transform="translate(0 1)"><path d="M.6 4L3.4 1H15V14.6L12.4 17.6H.6Z" fill="#f2f2f2" stroke="#b4b4b4" stroke-width="1" stroke-linejoin="round"/><path d="M12.4 4L15 1V14.6L12.4 17.6Z" fill="#c4c4c4"/><path d="M.6 4L3.4 1H15L12.4 4Z" fill="#e4e4e4"/><path d="M.6 4H12.4V17.6" fill="none" stroke="#c0c0c0" stroke-width=".8"/><g fill="#c2c2c2"><rect x="2.4" y="6" width="1.6" height="1.5"/><rect x="5.4" y="6" width="1.6" height="1.5"/><rect x="8.4" y="6" width="1.6" height="1.5"/><rect x="2.4" y="9.6" width="1.6" height="1.5"/><rect x="5.4" y="9.6" width="1.6" height="1.5"/><rect x="8.4" y="9.6" width="1.6" height="1.5"/><rect x="2.4" y="13.2" width="1.6" height="1.5"/><rect x="5.4" y="13.2" width="1.6" height="1.5"/></g><path d="M6.6 11.6H12.4V9.2L17 13.2L12.4 17.2V14.8H6.6Z" fill="#d4d4d4" stroke="#b0b0b0" stroke-width=".9" stroke-linejoin="round"/></g></svg></div>
<div class="a" style="left:952px;top:64px;width:24px;height:22px;border:1px solid #9c9c9c;border-left:none;background:#f2f2f2;overflow:hidden"><svg width="23" height="20" viewBox="0 0 23 20" style="display:block;overflow:visible"><circle cx="2.6" cy="4.4" r="3.9" fill="#f7f7f7" stroke="#6c6c6c" stroke-width="1.8"/><path d="M5.4 7.6L11 15.6" stroke="#7c7c7c" stroke-width="2.8" stroke-linecap="round"/><path d="M14.2 11H19.8L17 14Z" fill="#666"/></svg></div><div class="a" style="left:980px;top:64px;width:281px;height:22px;border:1px solid #c2c2c8;border-radius:2px;background:#fef09c"></div><div class="t" style="left:985px;top:63px;font-style:italic;color:#b4b4ac">查找主数据和单据</div><div class="a" style="left:1264px;top:64px;width:58px;height:22px;background:#bebebe;color:#fff;font-weight:bold;font-size:13px;line-height:25px;text-align:center">搜索</div>
<div class="win" style="left:0;top:52px;width:308px;height:490px;border-right:1px solid #a8a8a8;border-bottom:1px solid #a8a8a8;border-top:1px solid #acacac;box-shadow:1px 1px 0 #dcdcdc"></div><div class="wtitle" style="left:0;top:55px;width:305px;height:24px"></div><div class="wbody" style="left:2px;top:82px;width:303px;height:457px"></div><div class="tbar" style="left:2px;top:78px;width:301px"></div><div class="t" style="left:9px;top:59px">主菜单</div><div class="wb" style="left:237px"><svg width="17" height="17" viewBox="0 0 17 17" style="display:block;overflow:visible"><rect x="3" y="12" width="11" height="2" fill="#c8c8c8"/></svg></div><div class="wb" style="left:259px"><svg width="17" height="17" viewBox="0 0 17 17" style="display:block;overflow:visible"><rect x="3.5" y="3.5" width="10" height="10" fill="#efefef" stroke="#c4c4c4"/><rect x="3" y="3" width="11" height="2" fill="#c4c4c4"/></svg></div><div class="wb" style="left:281px"><svg width="17" height="17" viewBox="0 0 17 17" style="display:block;overflow:visible"><path d="M4.4 4.4L12.6 12.6M12.6 4.4L4.4 12.6" stroke="#c6c6c6" stroke-width="1.8"/><rect x="6.2" y="6.2" width="4.6" height="4.6" fill="#c2c2c2"/></svg></div><div class="t" style="left:11px;top:82px"><span style="font-size:11px;letter-spacing:-0.9px">OEC</span>中国有限公司</div><div class="t s11" style="left:12px;top:98px">Jayson Butler</div><div class="tab" style="left:91px;top:120px;width:102px;height:17px">拖放与关联</div><div class="tab" style="left:192px;top:120px;width:89px;height:17px">我的菜单</div><div class="a" style="left:17px;top:137px;width:270px;height:379px;border-top:1px solid #a4a4a4;border-right:1px solid #a4a4a4;border-bottom:1px solid #a4a4a4;background:#f2f2f2"></div><div class="tab on" style="left:26px;top:118px;width:66px;height:20px;line-height:20px">模块</div><div class="row" style="top:138px"><svg width="16" height="17" viewBox="0 0 16 17" style="overflow:visible"><rect x=".5" y=".5" width="8" height="10" fill="#fff" stroke="#777" stroke-width=".9"/><path d="M2 3H5M2 5H4M2 7H5" stroke="#888" stroke-width=".8"/><rect x="7" y="5" width="8.6" height="11" fill="#f9b114" stroke="#f29a00" stroke-width=".8"/><path d="M9 8.4H13.6M9 10.6H13.6M9 12.8H13.6" stroke="#fff" stroke-width="1.1"/></svg><b>管理(A)</b></div><div class="sep" style="top:164px"></div><div class="row" style="top:165px"><svg width="16" height="17" viewBox="0 0 16 17" style="overflow:visible"><circle cx="8" cy="8.6" r="7.6" fill="#fbbd1f" stroke="#f2a100" stroke-width=".9"/><path d="M8 8.6V1Q11.4 1 13.6 3.4Z" fill="#6fb53a"/><path d="M8 8.6L13.6 3.4Q16.6 8 12.8 14.2Z" fill="#93b7dc" stroke="#6f9cc8" stroke-width=".6"/></svg><b>财务(F)</b></div><div class="sep" style="top:191px"></div><div class="row" style="top:192px"><svg width="16" height="17" viewBox="0 0 16 17" style="overflow:visible"><circle cx="5" cy="3.8" r="2.8" fill="#8fb5de" stroke="#5b8fc6" stroke-width=".7"/><path d="M.6 12Q.6 7 5 7Q9 7 9.4 12Z" fill="#8fb5de" stroke="#5b8fc6" stroke-width=".7"/><circle cx="10.4" cy="6.4" r="3" fill="#fbb116" stroke="#ee9700" stroke-width=".7"/><path d="M5 15.6Q5 10 10.4 10Q15.6 10 15.6 15.6Z" fill="#fbb116" stroke="#ee9700" stroke-width=".7"/></svg><b>CRM(C)</b></div><div class="sep" style="top:218px"></div><div class="row" style="top:219px"><svg width="16" height="17" viewBox="0 0 16 17" style="overflow:visible"><path d="M1.2 4H8.4Q11 4 11 7.5Q11 11 8.4 11H1.2" fill="none" stroke="#1c6fc4" stroke-width="1.9"/><path d="M14.8 7.2H9Q6.2 7.2 6.2 10.6Q6.2 14 9 14H14.8" fill="none" stroke="#2ea536" stroke-width="2"/><path d="M10.6 9.4Q10 11 8.4 11H7.4" fill="none" stroke="#1c6fc4" stroke-width="1.9"/></svg><b>机会(O)</b></div><div class="sep" style="top:245px"></div><div class="row" style="top:246px"><svg width="16" height="17" viewBox="0 0 16 17" style="overflow:visible"><path d="M2.6 1.5H9L15.8 9L9.6 15.7L3.9 10Z" fill="#b4d0ec" stroke="#1f6fae" stroke-width="1.1" stroke-linejoin="round"/><path d="M6.4 6.4L10.4 10.6M8.2 5L12.2 9.2M10 3.8L13.8 8M5 8.4L8.8 12.4" stroke="#e4eef9" stroke-width="1"/><path d="M9 1.5L15.8 9" stroke="#1f6fae" stroke-width="1.6"/><circle cx="5.2" cy="3.8" r="1" fill="#fff" stroke="#1f6fae" stroke-width=".7"/><path d="M4.4 3.4Q1.6 6 2.4 11Q3 14.4 4.4 12.6Q5 10.6 3.6 8.4" fill="none" stroke="#1f6fae" stroke-width=".9"/></svg><b>销售 - 应收账款(S)</b></div><div class="sep" style="top:272px"></div><div class="row" style="top:273px"><svg width="16" height="17" viewBox="0 0 16 17" style="overflow:visible"><circle cx="1.2" cy="1.2" r="1.1" fill="#1f6fae"/><path d="M1.2 1.2L3.4 3.8" stroke="#1f6fae" stroke-width="1.3"/><path d="M3.2 3.9L16 4.1L13.4 11.5H5.6Z" fill="#8db9e6" stroke="#1f6fae" stroke-width="1.2" stroke-linejoin="round"/><path d="M6.2 11.5L5.2 13.6H12.6" fill="none" stroke="#555" stroke-width="1"/><circle cx="5.2" cy="14.5" r="1.4" fill="#666"/><circle cx="12.6" cy="14.5" r="1.4" fill="#666"/></svg><b>采购 - 应付账款(P)</b></div><div class="sep" style="top:299px"></div><div class="row" style="top:300px"><svg width="16" height="17" viewBox="0 0 16 17" style="overflow:visible"><ellipse cx="4.3" cy="4.6" rx="2.3" ry="3" fill="#fafafa" stroke="#444" stroke-width="1.3"/><ellipse cx="10.6" cy="4.6" rx="2.3" ry="3" fill="#fafafa" stroke="#444" stroke-width="1.3"/><path d="M3.4 7.6H5.2V9.4H3.4ZM9.7 7.6H11.5V9.4H9.7Z" fill="#555"/><path d="M.4 14.8V11.6Q.4 9.2 2.6 9.2H6.8V14.8Z" fill="#e05a30" stroke="#b8300c" stroke-width=".9" stroke-linejoin="round"/><path d="M15.2 14.8V11.6Q15.2 9.2 13 9.2H8V14.8Z" fill="#5ba0dc" stroke="#1f6fae" stroke-width=".9" stroke-linejoin="round"/><path d="M1.6 11.4H6M1.6 12.8H6" stroke="#ee8a64" stroke-width=".7"/><path d="M9 11.4H14M9 12.8H14" stroke="#9cc6ec" stroke-width=".7"/></svg><b>业务伙伴(B)</b></div><div class="sep" style="top:326px"></div><div class="row" style="top:327px"><svg width="16" height="17" viewBox="0 0 16 17" style="overflow:visible"><rect x="4.4" y="1.4" width="6.4" height="12.6" rx="1.8" fill="#ffd740" stroke="#f59a00" stroke-width="1"/><rect x="5.6000000000000005" y="2.4" width="2.2399999999999998" height="10.6" fill="#ffe98a"/><path d="M5.0 3.8H10.200000000000001" stroke="#f8b820" stroke-width=".7"/><path d="M5.0 6.0H10.200000000000001" stroke="#f8b820" stroke-width=".7"/><path d="M5.0 8.2H10.200000000000001" stroke="#f8b820" stroke-width=".7"/><path d="M5.0 10.399999999999999H10.200000000000001" stroke="#f8b820" stroke-width=".7"/><path d="M5.0 12.599999999999998H10.200000000000001" stroke="#f8b820" stroke-width=".7"/><rect x="0.4" y="5.4" width="6.2" height="11" rx="1.8" fill="#ffd740" stroke="#f59a00" stroke-width="1"/><rect x="1.6" y="6.4" width="2.17" height="9" fill="#ffe98a"/><path d="M1.0 7.800000000000001H6.000000000000001" stroke="#f8b820" stroke-width=".7"/><path d="M1.0 10.0H6.000000000000001" stroke="#f8b820" stroke-width=".7"/><path d="M1.0 12.2H6.000000000000001" stroke="#f8b820" stroke-width=".7"/><path d="M1.0 14.399999999999999H6.000000000000001" stroke="#f8b820" stroke-width=".7"/><rect x="9.8" y="6.4" width="6" height="9.4" rx="1.8" fill="#ffd740" stroke="#f59a00" stroke-width="1"/><rect x="11.0" y="7.4" width="2.0999999999999996" height="7.4" fill="#ffe98a"/><path d="M10.4 8.8H15.200000000000001" stroke="#f8b820" stroke-width=".7"/><path d="M10.4 11.0H15.200000000000001" stroke="#f8b820" stroke-width=".7"/><path d="M10.4 13.2H15.200000000000001" stroke="#f8b820" stroke-width=".7"/></svg><b>收付款业务(N)</b></div><div class="sep" style="top:353px"></div><div class="row" style="top:354px"><svg width="16" height="17" viewBox="0 0 16 17" style="overflow:visible"><rect x=".7" y=".9" width="11.4" height="11.8" fill="#fff" stroke="#555" stroke-width="1"/><rect x=".2" y=".4" width="12.4" height="1.8" fill="#444"/><path d="M2.6 4.6H8.4M2.6 7H6.4M2.6 9.4H5.4" stroke="#555" stroke-width="1"/><rect x="6.6" y="6.6" width="9.6" height="10.2" fill="#f0f0f0"/><g fill="#0f5f98"><rect x="7.2" y="7.2" width="3.9" height="4.1"/><rect x="11.9" y="7.2" width="3.9" height="4.1"/><rect x="7.2" y="12.2" width="3.9" height="4.1"/><rect x="11.9" y="12.2" width="3.9" height="4.1"/></g><g fill="#fff"><rect x="8.6" y="8.7" width="1.1" height="1.1"/><rect x="13.3" y="8.7" width="1.1" height="1.1"/><rect x="8.6" y="13.7" width="1.1" height="1.1"/><rect x="13.3" y="13.7" width="1.1" height="1.1"/></g></svg><b>库存(I)</b></div><div class="sep" style="top:380px"></div><div class="row" style="top:381px"><svg width="16" height="17" viewBox="0 0 16 17" style="overflow:visible"><path d="M1 16.6V4.8L6.2 9.4V4.8L11.2 9.4V16.6Z" fill="#1e2f8c"/><rect x="11.2" y=".8" width="1.9" height="15.8" fill="#1e2f8c"/><rect x="14" y=".8" width="1.9" height="15.8" fill="#1e2f8c"/><path d="M2.4 13.2H3.8M4.8 13.2H6.2M7.2 13.2H8.6M9.4 13.2H10.6" stroke="#fff" stroke-width="1.3"/></svg><b>资源(R)</b></div><div class="sep" style="top:407px"></div><div class="row" style="top:408px"><svg width="16" height="17" viewBox="0 0 16 17" style="overflow:visible"><rect x="0" y="3.8" width="1.6" height="1.8" fill="#666"/><rect x="3" y="3.2" width="2.4" height="3" fill="#777"/><path d="M7.4 2.4H15.4V7Q15.4 9 13.4 9L14.8 14H11.8L10.4 9Q7.4 8.6 7.4 6Z" fill="#8db9e6" stroke="#1f6fae" stroke-width="1.1" stroke-linejoin="round"/><path d="M9 4.4H13.8M9 6.2H13.4" stroke="#c4dcf2" stroke-width=".9"/><path d="M11 10.6L13 12.4" stroke="#1f6fae" stroke-width=".9"/></svg><b>生产(D)</b></div><div class="sep" style="top:434px"></div><div class="row" style="top:435px"><svg width="16" height="17" viewBox="0 0 16 17" style="overflow:visible"><rect x=".4" y=".6" width="12.6" height="2.4" fill="#4c4c4c"/><g fill="#555"><rect x=".4" y="4.6" width="2.8" height="1.8"/><rect x="8.6" y="4.6" width="3.6" height="1.8"/><rect x=".4" y="7.8" width="2.8" height="1.8"/><rect x="4.4" y="7.8" width="3" height="1.8"/><rect x=".4" y="11" width="2.8" height="1.8"/><rect x="4.4" y="11" width="2.2" height="1.8"/></g><rect x="4.4" y="4.6" width="3.4" height="1.8" fill="#e2461e"/><circle cx="11.6" cy="11.8" r="4.2" fill="#fff" stroke="#444" stroke-width="1.1"/><path d="M11.6 9.2V12H13.8" fill="none" stroke="#444" stroke-width="1"/></svg><b>物料需求计划(M)</b></div><div class="sep" style="top:461px"></div><div class="row" style="top:462px"><svg width="16" height="17" viewBox="0 0 16 17" style="overflow:visible"><path d="M11.4 1H15.8M11.4 3H15.8M11.4 5H15.8" stroke="#444" stroke-width=".9"/><path d="M9.2 1H10.2M9.2 3H10.2M9.2 5H10.2" stroke="#444" stroke-width=".9"/><path d="M1.2 13.8L5.6 10.2Q4.4 7.4 6.4 5.6Q7.8 4.4 9.4 5L7.6 7.2L8.4 9L10.2 9.2L11.6 7.4Q12.4 9.2 11.2 10.8Q9.6 12.6 7.2 12L3 15.6Q1.8 16.4 1 15.4Q.4 14.6 1.2 13.8Z" fill="#8db9e6" stroke="#1f6fae" stroke-width="1" stroke-linejoin="round"/></svg><b>服务(E)</b></div><div class="sep" style="top:488px"></div><div class="row" style="top:489px"><svg width="16" height="17" viewBox="0 0 16 17" style="overflow:visible"><ellipse cx="6" cy="4.2" rx="2.7" ry="3.3" fill="#fafafa" stroke="#444" stroke-width="1.5"/><path d="M5 7.4H7V9.6H5Z" fill="#555"/><path d="M.6 15.4V12Q.6 9.6 3.4 9.6H8V15.4Z" fill="#6cb83c" stroke="#3c8a24" stroke-width=".9" stroke-linejoin="round"/><path d="M8.4 8.6H12.8L15.6 11.4V16.4H8.4Z" fill="#fff" stroke="#444" stroke-width="1.1"/><path d="M12.8 8.6V11.4H15.6" fill="none" stroke="#444" stroke-width=".9"/></svg><b>人力资源(H)</b></div><div class="a" style="left:269px;top:138px;width:1px;height:378px;background:#acacac"></div><div class="a" style="left:270px;top:138px;width:16px;height:18px;background:#ececec;border:1px solid #f8f8f8"></div><div class="a" style="left:274px;top:145px;width:0;height:0;border-left:4px solid transparent;border-right:4px solid transparent;border-bottom:4px solid #555"></div><div class="a" style="left:271px;top:156px;width:14px;height:300px;border:1px solid #a6a6a6;background:#e2e2e2;box-shadow:0 0 0 1px #f6f6f6"></div><div class="a" style="left:270px;top:499px;width:16px;height:16px;background:#e6e6e6;border:1px solid #f4f4f4"></div><div class="a" style="left:274px;top:505px;width:0;height:0;border-left:4px solid transparent;border-right:4px solid transparent;border-top:4px solid #555"></div><svg class="a" style="left:275px;top:303px" width="7" height="9" viewBox="0 0 7 9"><rect x="0" y="0" width="2" height="2" fill="#fcfcfc"/><rect x="0" y="0" width="1" height="1" fill="#b0b0b0"/><rect x="4" y="0" width="2" height="2" fill="#fcfcfc"/><rect x="4" y="0" width="1" height="1" fill="#b0b0b0"/><rect x="0" y="3" width="2" height="2" fill="#fcfcfc"/><rect x="0" y="3" width="1" height="1" fill="#b0b0b0"/><rect x="4" y="3" width="2" height="2" fill="#fcfcfc"/><rect x="4" y="3" width="1" height="1" fill="#b0b0b0"/><rect x="0" y="6" width="2" height="2" fill="#fcfcfc"/><rect x="0" y="6" width="1" height="1" fill="#b0b0b0"/><rect x="4" y="6" width="2" height="2" fill="#fcfcfc"/><rect x="4" y="6" width="1" height="1" fill="#b0b0b0"/></svg>
<div class="win" style="left:409px;top:52px;width:543px;height:582px;border:1px solid #a8a8a8;border-top-color:#bcbcbc;box-shadow:1px 1px 0 #dcdcdc"></div><div class="wtitle" style="left:412px;top:55px;width:537px;height:24px"></div><div class="wbody" style="left:412px;top:82px;width:536px;height:549px"></div><div class="tbar" style="left:414px;top:78px;width:533px"></div><div class="t" style="left:420px;top:59px;word-spacing:2px">用户 - 设置</div><div class="wb" style="left:881px"><svg width="17" height="17" viewBox="0 0 17 17" style="display:block;overflow:visible"><rect x="3" y="12" width="11" height="2" fill="#c8c8c8"/></svg></div><div class="wb" style="left:903px"><svg width="17" height="17" viewBox="0 0 17 17" style="display:block;overflow:visible"><rect x="3.5" y="3.5" width="10" height="10" fill="#efefef" stroke="#c4c4c4"/><rect x="3" y="3" width="11" height="2" fill="#c4c4c4"/></svg></div><div class="wb" style="left:925px"><svg width="17" height="17" viewBox="0 0 17 17" style="display:block;overflow:visible"><path d="M4.4 4.4L12.6 12.6M12.6 4.4L4.4 12.6" stroke="#c6c6c6" stroke-width="1.8"/><rect x="6.2" y="6.2" width="4.6" height="4.6" fill="#c2c2c2"/></svg></div><div class="a" style="left:426px;top:91px;width:13px;height:13px;border:1px solid #8e8f8f;background:#fff"><svg width="11" height="11" viewBox="0 0 11 11" style="display:block;overflow:visible"><path d="M2 5.2L4.4 8.2L9 2.4" fill="none" stroke="#111" stroke-width="1.9"/></svg></div><div class="t" style="left:443px;top:89px">超级用户</div><div class="a" style="left:592px;top:91px;width:13px;height:13px;border:1px solid #8e8f8f;background:#fff"><svg width="11" height="11" viewBox="0 0 11 11" style="display:block;overflow:visible"><path d="M2 5.2L4.4 8.2L9 2.4" fill="none" stroke="#111" stroke-width="1.9"/></svg></div><div class="t" style="left:609px;top:89px">移动用户</div><div class="t" style="left:425px;top:112px">用户代码</div><div class="ul" style="left:423px;top:126px;width:248px"></div><div class="inp" style="left:671px;top:112px;width:171px;background:#e9e9e9">manager</div><div class="t" style="left:425px;top:129px">用户名</div><div class="ul" style="left:423px;top:143px;width:248px"></div><div class="inp" style="left:671px;top:129px;width:171px;background:#fff">Jayson Butler</div><div class="t" style="left:425px;top:147px">默认值</div><div class="ul" style="left:423px;top:161px;width:248px"></div><div class="inp" style="left:671px;top:147px;width:171px;background:#fff"></div><div class="tab" style="left:430px;top:169px;width:94px;height:18px">常规</div><div class="tab" style="left:523px;top:169px;width:99px;height:18px;padding-left:0">服务</div><div class="a" style="left:421px;top:186px;width:469px;height:421px;border:1px solid #7c7c7c;background:#f2f2f2"></div><div class="tab on" style="left:621px;top:167px;width:95px;height:20px;line-height:21px;border-color:#9a9a9a">显示</div><div class="t" style="left:427px;top:190px">界面风格</div><div class="ul" style="left:425px;top:205px;width:189px"></div><div class="dd s11" style="top:191px;"><i></i></div><div class="t" style="left:427px;top:208px">颜色</div><div class="ul" style="left:425px;top:222px;width:189px"></div><div class="dd s11" style="top:209px;"><i></i></div><div class="t" style="left:427px;top:225px">语言</div><div class="ul" style="left:425px;top:240px;width:189px"></div><div class="dd s11" style="top:226px;background:#fde88c;border-color:#fde88c;letter-spacing:-0.2px;">Simplified Chinese (P.R.China)<i></i></div><div class="t" style="left:427px;top:243px">字体</div><div class="ul" style="left:425px;top:257px;width:189px"></div><div class="dd s11" style="top:244px;"><i></i></div><div class="t" style="left:427px;top:260px">字体大小</div><div class="ul" style="left:425px;top:275px;width:189px"></div><div class="dd s11" style="top:261px;">11<i></i></div><div class="t" style="left:427px;top:277px">预览</div><div class="pv" style="left:425px;top:295px;width:365px;height:100px"></div><div class="t s11" style="left:567px;top:337px;letter-spacing:-0.3px">AaBbYyZz - abcd</div><div class="t" style="left:427px;top:396px">背景</div><div class="ul" style="left:425px;top:410px;width:189px"></div><div class="dd" style="top:397px"><i></i></div><div class="btn" style="left:789px;top:396px;width:21px;height:15px"><svg width="19" height="13" viewBox="0 0 19 13" style="display:block" aria-label="..."><rect x="4.5" y="8" width="1.4" height="1.6" fill="#222"/><rect x="8.5" y="8" width="1.4" height="1.6" fill="#222"/><rect x="12.5" y="8" width="1.4" height="1.6" fill="#222"/></svg></div><div class="t" style="left:427px;top:412px">预览</div><div class="pv" style="left:425px;top:430px;width:365px;height:117px"></div><div class="t" style="left:427px;top:549px">图像显示</div><div class="ul" style="left:425px;top:564px;width:189px"></div><div class="dd" style="top:550px;font-size:12px;line-height:12px">全屏幕<i></i></div><div class="t" style="left:427px;top:566px">扩展图象处理</div><div class="dd" style="top:567px;font-size:12px;line-height:12px">全部<i></i></div><div class="btn" style="left:710px;top:584px;width:176px;height:21px;line-height:18px">恢复缺省设置</div><div class="a" style="left:413px;top:607px;width:520px;height:20px;overflow:hidden"><div class="btn" style="left:10px;top:5px;width:68px;height:21px;line-height:18px;background:linear-gradient(90deg,#f7a81c 0,#f9c23a 8px,rgba(0,0,0,0) 9px),linear-gradient(#fbe9a0,#f8da6c 30%,#f6d25c 70%,#f1c648)">更新</div><div class="btn" style="left:83px;top:5px;width:69px;height:21px;line-height:18px">取消</div><div class="btn" style="left:161px;top:5px;width:146px;height:21px;line-height:18px">复制表单设置</div></div><div class="a" style="left:927px;top:83px;width:18px;height:544px;background:#f2f2f2;border:1px solid #d6d4ca"></div><div class="a" style="left:929px;top:84px;width:14px;height:14px;background:#e8e8e8"></div><div class="a" style="left:932px;top:89px;width:0;height:0;border-left:4px solid transparent;border-right:4px solid transparent;border-bottom:4px solid #555"></div><div class="a" style="left:929px;top:98px;width:14px;height:500px;border:1px solid #a6a6a6;background:#e2e2e2"></div><div class="a" style="left:929px;top:610px;width:14px;height:15px;background:#e4e4e4"></div><div class="a" style="left:932px;top:616px;width:0;height:0;border-left:4px solid transparent;border-right:4px solid transparent;border-top:4px solid #555"></div><svg class="a" style="left:933px;top:345px" width="7" height="9" viewBox="0 0 7 9"><rect x="0" y="0" width="2" height="2" fill="#fcfcfc"/><rect x="0" y="0" width="1" height="1" fill="#b0b0b0"/><rect x="4" y="0" width="2" height="2" fill="#fcfcfc"/><rect x="4" y="0" width="1" height="1" fill="#b0b0b0"/><rect x="0" y="3" width="2" height="2" fill="#fcfcfc"/><rect x="0" y="3" width="1" height="1" fill="#b0b0b0"/><rect x="4" y="3" width="2" height="2" fill="#fcfcfc"/><rect x="4" y="3" width="1" height="1" fill="#b0b0b0"/><rect x="0" y="6" width="2" height="2" fill="#fcfcfc"/><rect x="0" y="6" width="1" height="1" fill="#b0b0b0"/><rect x="4" y="6" width="2" height="2" fill="#fcfcfc"/><rect x="4" y="6" width="1" height="1" fill="#b0b0b0"/></svg>
<svg class="a" style="left:1126px;top:576px" width="204" height="48" viewBox="1126 576 204 48">
<defs><linearGradient id="cg" x1="0" y1="0" x2="0" y2="1"><stop offset="0" stop-color="#2cb6f3"/><stop offset="1" stop-color="#1468c8"/></linearGradient>
<linearGradient id="gg" x1="0" y1="0" x2="0" y2="1"><stop offset="0" stop-color="#ffc90e"/><stop offset="1" stop-color="#e9a01e"/></linearGradient>
<linearGradient id="sg" x1="0" y1="0" x2="0" y2="1"><stop offset="0" stop-color="#08a4e8"/><stop offset="1" stop-color="#1c58c4"/></linearGradient></defs>
<path d="M1160 589.5Q1147 580 1135.5 590Q1127.5 598 1131.5 606Q1136 613 1147 610.5Q1137 608.5 1136.8 600Q1137.5 590 1149 587.5Q1155 586.5 1160 589.5Z" fill="url(#cg)"/>
<path d="M1158 592.5Q1149 587 1141.5 592.5Q1137.5 596 1139 601Q1141 593 1149.5 591.8Q1154 591.2 1158 592.5Z" fill="#55b4ee"/>
<text x="1143.5" y="608.4" font-family="Liberation Sans, sans-serif" font-size="16.6" font-weight="bold" font-style="italic" fill="url(#cg)" stroke="#1d86da" stroke-width=".5" textLength="90" lengthAdjust="spacingAndGlyphs">OMMPRO</text>
<text x="1170" y="619.2" font-family="Liberation Sans, sans-serif" font-size="10" font-weight="bold" fill="#17a0ea" stroke="#17a0ea" stroke-width=".4" textLength="41" lengthAdjust="spacingAndGlyphs">工博科技</text>
<path d="M1297.4 588L1325 594V595H1298L1281.5 611L1256 605L1281 604.5Z" fill="#c4c4c8"/>
<path d="M1252 578H1305.6L1281 604.7H1252Z" fill="url(#sg)"/>
<path d="M1297.8 594.5H1325V620.7H1272.4Z" fill="url(#gg)"/>
<text x="1253" y="599" font-family="Liberation Sans, sans-serif" font-size="21.6" font-weight="bold" fill="#fff" stroke="#fff" stroke-width=".7" textLength="38.5" lengthAdjust="spacingAndGlyphs">SAP</text>
<text x="1322.4" y="607.6" text-anchor="end" font-family="Liberation Sans, sans-serif" font-size="7.8" font-weight="bold" fill="#fff" stroke="#fff" stroke-width=".3" textLength="18.6" lengthAdjust="spacingAndGlyphs">Gold</text>
<text x="1322.4" y="615.8" text-anchor="end" font-family="Liberation Sans, sans-serif" font-size="7.8" font-weight="bold" fill="#fff" stroke="#fff" stroke-width=".3" textLength="30" lengthAdjust="spacingAndGlyphs">Partner</text>
</svg>
<div class="a" style="left:0;top:635px;width:1308px;height:2px;background:#b4b4b4"></div><div class="a" style="left:0;top:637px;width:1365px;height:20px;background:#f2f2f2"></div><div class="a" style="left:0;top:657px;width:1365px;height:1px;background:#bdbdbd"></div><div class="a" style="left:0;top:658px;width:1365px;height:2px;background:#f2ecf8"></div><div class="a" style="left:5px;top:638px;width:197px;height:19px;border:1px solid #8c8c8c;border-bottom:none;border-radius:4px 4px 0 0;background:#f6f6f6;text-align:center;line-height:23px;padding-left:8px">系统消息日志 (19)</div><div class="sb" style="left:1309px"><svg width="14" height="15" viewBox="0 0 14 15" style="display:block;overflow:visible"><rect x="2.7" y="3.2" width="8.6" height="9.2" fill="none" stroke="#333" stroke-width="1.1"/><rect x="2.2" y="2.4" width="9.6" height="1.6" fill="#333"/></svg></div><div class="sb" style="left:1327px"><svg width="14" height="15" viewBox="0 0 14 15" style="display:block;overflow:visible"><path d="M5.6 5V2.8H12V9.6H9.6" fill="none" stroke="#333" stroke-width="1.3"/><rect x="2.6" y="6" width="6.6" height="6.6" fill="none" stroke="#333" stroke-width="1.2"/></svg></div><div class="sb" style="left:1345px"><svg width="14" height="15" viewBox="0 0 14 15" style="display:block;overflow:visible"><path d="M3.4 3.8L10.6 11.2M10.6 3.8L3.4 11.2" stroke="#2c2c2c" stroke-width="2.3"/></svg></div>
</body></html>
